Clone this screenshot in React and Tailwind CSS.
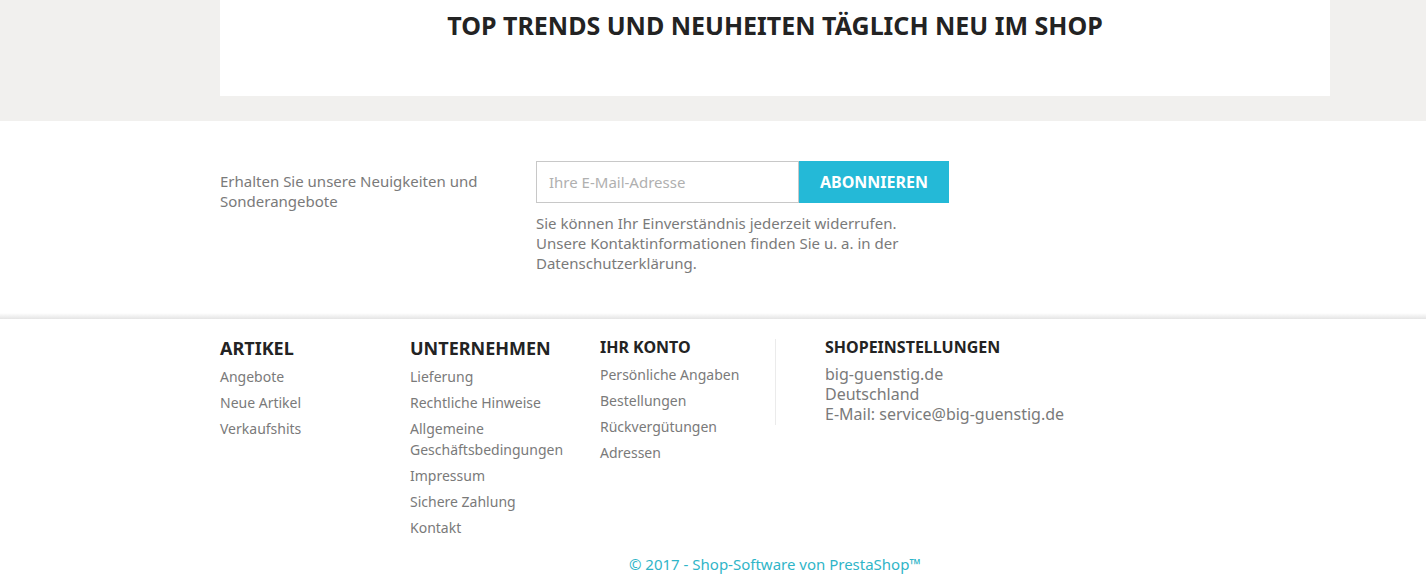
export default function App() {
  const font = { fontFamily: '"Noto Sans", "Open Sans", sans-serif' };
  return (
    <div className="w-[1426px] bg-white" style={font}>
      <div className="bg-[#f1f0ee] pb-[25px]">
        <div className="ml-[220px] w-[1110px] h-[96px] bg-white pt-[9px] text-center">
          <h2 className="text-[25px] leading-[32px] font-bold text-[#232323]">
            TOP TRENDS UND NEUHEITEN TÄGLICH NEU IM SHOP
          </h2>
        </div>
      </div>

      <div className="pt-[40px] h-[192px]">
        <div className="ml-[220px] w-[1110px] flex">
          <div className="w-[316px] pt-[10px] text-[15px] leading-[20px] text-[#7a7a7a] pr-[20px]">
            Erhalten Sie unsere Neuigkeiten und Sonderangebote
          </div>
          <div className="flex flex-col">
            <div className="flex">
              <input
                className="w-[263px] h-[42px] border border-[#c8c8c8] px-[12px] text-[15px] text-[#7a7a7a] placeholder:text-[#b0b0b0] outline-none"
                placeholder="Ihre E-Mail-Adresse"
                style={font}
              />
              <button className="w-[150px] h-[42px] bg-[#24b9d7] text-white text-[16px] font-bold">
                ABONNIEREN
              </button>
            </div>
            <p className="mt-[10px] w-[380px] text-[15px] leading-[20px] text-[#7a7a7a]">
              Sie können Ihr Einverständnis jederzeit widerrufen. Unsere Kontaktinformationen finden Sie u. a. in der Datenschutzerklärung.
            </p>
          </div>
        </div>
      </div>

      <div className="h-[6px] bg-gradient-to-b from-white to-[#e4e4e4]"></div>

      <div className="ml-[220px] w-[1110px] flex pt-[17px]">
        <div className="w-[190px]">
          <h3 className="text-[18px] leading-[24px] font-bold text-[#232323]">ARTIKEL</h3>
          <ul className="mt-[6px] text-[14px] leading-[21px] text-[#7a7a7a]">
            <li className="pb-[5px]">Angebote</li>
            <li className="pb-[5px]">Neue Artikel</li>
            <li className="pb-[5px]">Verkaufshits</li>
          </ul>
        </div>
        <div className="w-[190px]">
          <h3 className="text-[18px] leading-[24px] font-bold text-[#232323]">UNTERNEHMEN</h3>
          <ul className="mt-[6px] text-[14px] leading-[21px] text-[#7a7a7a]">
            <li className="pb-[5px]">Lieferung</li>
            <li className="pb-[5px]">Rechtliche Hinweise</li>
            <li className="pb-[5px]">Allgemeine Geschäftsbedingungen</li>
            <li className="pb-[5px]">Impressum</li>
            <li className="pb-[5px]">Sichere Zahlung</li>
            <li className="pb-[5px]">Kontakt</li>
          </ul>
        </div>
        <div className="w-[175px] pt-[1px]">
          <h3 className="text-[16px] leading-[20px] font-bold text-[#232323]">IHR KONTO</h3>
          <ul className="mt-[7px] text-[14px] leading-[21px] text-[#7a7a7a]">
            <li className="pb-[5px]">Persönliche Angaben</li>
            <li className="pb-[5px]">Bestellungen</li>
            <li className="pb-[5px]">Rückvergütungen</li>
            <li className="pb-[5px]">Adressen</li>
          </ul>
        </div>
        <div className="w-px h-[86px] mt-[3px] bg-[#ebebeb]"></div>
        <div className="pl-[49px] pt-[1px]">
          <h3 className="text-[16px] leading-[20px] font-bold text-[#232323]">SHOPEINSTELLUNGEN</h3>
          <div className="mt-[7px] text-[16px] leading-[20px] text-[#7a7a7a]">
            <div>big-guenstig.de</div>
            <div>Deutschland</div>
            <div>E-Mail: service@big-guenstig.de</div>
          </div>
        </div>
      </div>

      <div className="ml-[220px] w-[1110px] text-center text-[15px] leading-[20px] text-[#2fb5c8] pt-[11px] pb-[20px]">
        © 2017 - Shop-Software von PrestaShop™
      </div>
    </div>
  );
}
